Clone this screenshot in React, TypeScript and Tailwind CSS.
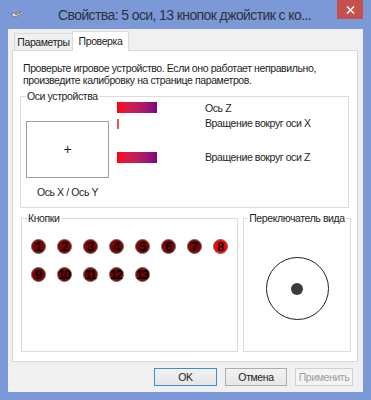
import React from "react";

const F = { fontFamily: '"Liberation Sans", Arial, sans-serif' };
const T = "text-[10.5px] tracking-[-0.4px]";

function GroupBox({ label, className, children, center }: { label: string; className?: string; children?: React.ReactNode; center?: boolean }) {
  return (
    <div className={"relative border border-[#dcdcdc] " + (className || "")}>
      <div className={"absolute -top-[7px] flex " + (center ? "left-0 right-0 justify-center" : "left-[5px]")}>
        <span className="bg-white px-[1px] text-[10.5px] tracking-[-0.4px] leading-[13px] text-[#1e1e1e] whitespace-nowrap">{label}</span>
      </div>
      {children}
    </div>
  );
}

function Btn({ n, on }: { n: number; on?: boolean }) {
  return (
    <div
      className={
        "w-[15px] h-[15px] rounded-full border border-[#707070] flex items-center justify-center " +
        (on ? "bg-[#ff0000]" : "bg-[#800000]")
      }
    >
      <span className={"text-[13px] leading-none font-bold text-black " + (n > 9 ? "tracking-[-1.6px] -ml-[1.5px]" : "")}>
        {n}
      </span>
    </div>
  );
}

export default function App() {
  return (
    <div className="w-[371px] h-[400px] bg-[#7b98d7] flex flex-col text-[#1e1e1e]" style={F}>
      {/* title bar */}
      <div className="h-[29px] flex items-start relative">
        <div className="ml-[10px] mt-[8px] w-[14px] h-[11px]">
          <svg width="14" height="11" viewBox="0 0 14 11">
            <path d="M2 1 L5 2 L4 4 Z" fill="#9aa6c8" />
            <path d="M1 6 L11 3 L13 6 L4 9 Z" fill="#d8dbe6" stroke="#6b6f86" strokeWidth="0.8" />
            <circle cx="6" cy="6" r="1" fill="#e04040" />
            <circle cx="8" cy="5.5" r="1" fill="#40a040" />
            <circle cx="10" cy="5" r="1" fill="#4060e0" />
          </svg>
        </div>
        <div className="ml-[34px] mt-[7px] text-[14px] tracking-[-0.6px] leading-[17px] text-[#2b3240] whitespace-nowrap">
          Свойства: 5 оси, 13 кнопок джойстик с ко...
        </div>
        <div className="absolute right-[8px] top-0 w-[26px] h-[19px] bg-[#c7504d] flex items-center justify-center">
          <svg width="9" height="8" viewBox="0 0 9 8">
            <path d="M1 0.5 L8 7.5 M8 0.5 L1 7.5" stroke="white" strokeWidth="1.6" />
          </svg>
        </div>
      </div>

      {/* client */}
      <div className="mx-[8px] h-[363px] bg-[#f0f0f0] flex flex-col">
        {/* tabs */}
        <div className="h-[21px] flex items-end pl-[6px]">
          <div className={"h-[17px] w-[59px] border border-b-0 border-[#d9d9d9] bg-[#f0f0f0] flex items-center justify-center leading-none " + T}>
            Параметры
          </div>
          <div className={"h-[20px] w-[57px] border border-b-0 border-[#d9d9d9] bg-white flex items-center justify-center leading-none relative z-10 -mb-[1px] -ml-[1px] " + T}>
            Проверка
          </div>
        </div>
        {/* panel */}
        <div className="ml-[4px] w-[346px] h-[312px] border border-[#d9d9d9] bg-white flex flex-col">
          <div className={"ml-[10px] mt-[11px] leading-[12px] " + T}>
            Проверьте игровое устройство. Если оно работает неправильно,
            <br />
            произведите калибровку на странице параметров.
          </div>
          <GroupBox label="Оси устройства" className="ml-[7px] mt-[10px] w-[329px] h-[112px]">
            <div className="flex">
              <div className="ml-[5px] mt-[24px] flex flex-col items-center">
                <div className="w-[83px] h-[57px] border border-[#a0a0a0] flex items-center justify-center">
                  <span className="text-[14px] leading-none -mt-[2px]">+</span>
                </div>
                <div className={"mt-[8px] leading-[13px] " + T}>Ось X / Ось Y</div>
              </div>
              <div className="ml-[8px] mt-[4px] flex flex-col">
                <div className="h-[12px] flex items-center">
                  <div className="w-[88px]">
                    <div className="w-[40px] h-[11px] bg-gradient-to-r from-[#ff0000] to-[#800080]" />
                  </div>
                  <span className={"leading-none mt-[3px] " + T}>Ось Z</span>
                </div>
                <div className="mt-[5px] h-[11px] flex items-center">
                  <div className="w-[88px]">
                    <div className="w-[2px] h-[10px] bg-[#ff5050]" />
                  </div>
                  <span className={"leading-none " + T}>Вращение вокруг оси X</span>
                </div>
                <div className="mt-[23px] h-[11px] flex items-center">
                  <div className="w-[88px]">
                    <div className="w-[40px] h-[11px] bg-gradient-to-r from-[#ff0000] to-[#800080]" />
                  </div>
                  <span className={"leading-none " + T}>Вращение вокруг оси Z</span>
                </div>
              </div>
            </div>
          </GroupBox>
          <div className="flex ml-[8px] mt-[10px]">
            <GroupBox label="Кнопки" className="w-[217px] h-[134px]">
              <div className="ml-[9px] mt-[20px] w-[200px] flex flex-wrap gap-x-[11px] gap-y-[13px]">
                {[1, 2, 3, 4, 5, 6, 7, 8, 9, 10, 11, 12, 13].map((n) => (
                  <Btn key={n} n={n} on={n === 8} />
                ))}
              </div>
            </GroupBox>
            <GroupBox label="Переключатель вида" center className="ml-[5px] w-[108px] h-[134px]">
              <div className="flex justify-center mt-[38px]">
                <div className="w-[63px] h-[63px] rounded-full border border-[#202020] flex items-center justify-center">
                  <div className="w-[12px] h-[12px] rounded-full bg-[#3c3c3c]" />
                </div>
              </div>
            </GroupBox>
          </div>
        </div>
        {/* buttons */}
        <div className="mt-[6px] flex justify-end gap-[8px] mr-[10px]">
          <div className={"w-[63px] h-[18px] border border-[#3c8ed8] bg-gradient-to-b from-[#f2f2f2] to-[#e6e6e6] flex items-center justify-center leading-none " + T}>
            OK
          </div>
          <div className={"w-[62px] h-[18px] border border-[#acacac] bg-gradient-to-b from-[#f2f2f2] to-[#e6e6e6] flex items-center justify-center leading-none " + T}>
            Отмена
          </div>
          <div className={"w-[58px] h-[18px] border border-[#d0d0d0] bg-[#f4f4f4] flex items-center justify-center leading-none text-[#a0a0a0] " + T}>
            Применить
          </div>
        </div>
      </div>
    </div>
  );
}
